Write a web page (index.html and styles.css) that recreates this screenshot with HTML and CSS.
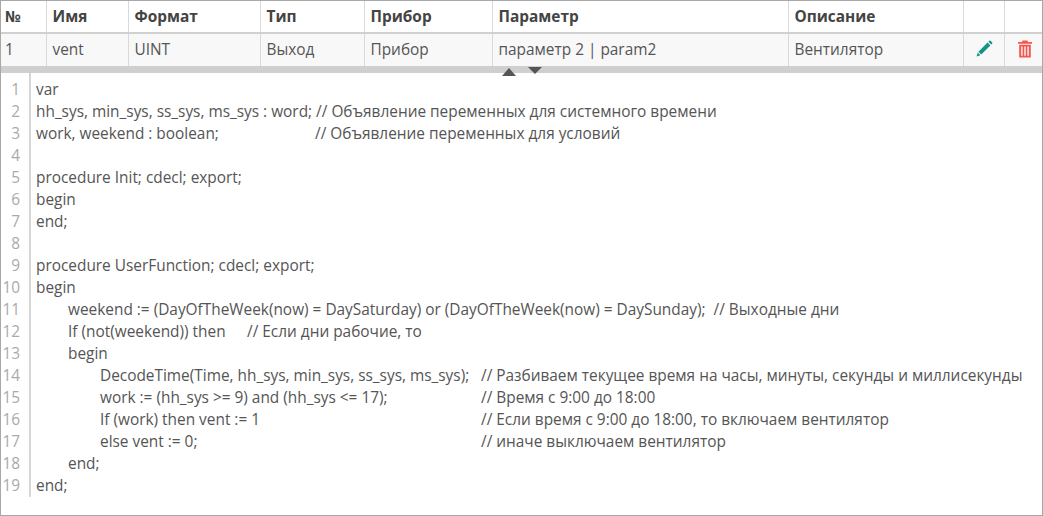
FILE: index.html
```html
<!DOCTYPE html>
<html lang="ru">
<head>
<meta charset="utf-8">
<title>Функция</title>
<link rel="stylesheet" href="styles.css">
</head>
<body>
<div class="frame">
  <table class="vars">
    <colgroup>
      <col class="c1"><col class="c2"><col class="c3"><col class="c4"><col class="c5"><col class="c6"><col class="c7"><col class="c8"><col class="c9">
    </colgroup>
    <thead>
      <tr><th>№</th><th>Имя</th><th>Формат</th><th>Тип</th><th>Прибор</th><th>Параметр</th><th>Описание</th><th></th><th></th></tr>
    </thead>
    <tbody>
      <tr>
        <td>1</td><td>vent</td><td>UINT</td><td>Выход</td><td>Прибор</td><td>параметр 2 | param2</td><td>Вентилятор</td>
        <td class="ic"><svg class="icon" width="18" height="18" viewBox="0 0 18 18"><path fill="#159488" d="M12.6 2.6 15.4 5.4 6.2 14.6 3.4 11.800ZM13.4 1.800l.9-.9c.4-.4 1-.4 1.4 0l1.400 1.400c.4.4.4 1 0 1.400l-.9.9ZM2.800 12.600l2.600 2.600-3.900 1.300Z"/></svg></td>
        <td class="ic trash"><svg class="icon" width="18" height="18" viewBox="0 0 18 18"><path fill="#f4574b" fill-rule="evenodd" d="M6.600 .5h4.800l.6 1.500H16v1.800H2V2H6ZM3.200 4.800H14.800V17.500H3.200ZM5.200 6.600V15.800H6.600V6.600ZM8.300 6.600V15.800H9.700V6.600ZM11.400 6.600V15.800H12.800V6.600Z"/></svg></td>
      </tr>
    </tbody>
  </table>
  <div class="splitter">
    <span class="arrow up"></span>
    <span class="arrow down"></span>
  </div>
  <div class="editor">
    <div class="gutter">
      <div>1</div><div>2</div><div>3</div><div>4</div><div>5</div><div>6</div><div>7</div><div>8</div><div>9</div><div>10</div><div>11</div><div>12</div><div>13</div><div>14</div><div>15</div><div>16</div><div>17</div><div>18</div><div>19</div>
    </div>
    <div class="code">
      <div class="ln">var</div>
      <div class="ln">hh_sys, min_sys, ss_sys, ms_sys : word; // Объявление переменных для системного времени</div>
      <div class="ln"><span class="stop s3">work, weekend : boolean;</span>// Объявление переменных для условий</div>
      <div class="ln"></div>
      <div class="ln">procedure Init; cdecl; export;</div>
      <div class="ln">begin</div>
      <div class="ln">end;</div>
      <div class="ln"></div>
      <div class="ln">procedure UserFunction; cdecl; export;</div>
      <div class="ln">begin</div>
      <div class="ln in1">weekend := (DayOfTheWeek(now) = DaySaturday) or (DayOfTheWeek(now) = DaySunday);  // Выходные дни</div>
      <div class="ln in1"><span class="stop s12">If (not(weekend)) then</span>// Если дни рабочие, то</div>
      <div class="ln in1">begin</div>
      <div class="ln in2"><span class="stop s14">DecodeTime(Time, hh_sys, min_sys, ss_sys, ms_sys);</span>// Разбиваем текущее время на часы, минуты, секунды и миллисекунды</div>
      <div class="ln in2"><span class="stop s15">work := (hh_sys &gt;= 9) and (hh_sys &lt;= 17);</span>// Время с 9:00 до 18:00</div>
      <div class="ln in2"><span class="stop s15">If (work) then vent := 1</span>// Если время с 9:00 до 18:00, то включаем вентилятор</div>
      <div class="ln in2"><span class="stop s15">else vent := 0;</span>// иначе выключаем вентилятор</div>
      <div class="ln in1">end;</div>
      <div class="ln">end;</div>
    </div>
  </div>
</div>
</body>
</html>
```
FILE: styles.css
```css
* { box-sizing: border-box; }
html, body { margin: 0; padding: 0; background: #fff; }
body { width: 1043px; height: 516px; overflow: hidden; font-family: "Open Sans", sans-serif; color: #555; }
.frame { width: 1043px; height: 516px; border: 1px solid #a8a8a8; background: #fff; display: flex; flex-direction: column; overflow: hidden; }
.vars { border-collapse: collapse; table-layout: fixed; width: 1041px; flex: none; font-size: 15.4px; }
.c1 { width: 45px; } .c2 { width: 82px; } .c3 { width: 132px; } .c4 { width: 104px; } .c5 { width: 128px; } .c6 { width: 296px; } .c7 { width: 175px; } .c8 { width: 41px; } .c9 { width: 38px; }
.vars th, .vars td { border-left: 1px solid #d9d9d9; padding: 0 6px; text-align: left; white-space: nowrap; overflow: hidden; }
.vars th:first-child, .vars td:first-child { border-left: 0; padding-left: 4px; }
.vars th { height: 32px; font-weight: 700; color: #444; background: #fff; }
.vars thead tr { border-bottom: 2px solid #d0d0d0; }
.vars td { height: 33px; padding-bottom: 2px; background: #f8f8f8; color: #555; }
.vars td.ic { padding: 0 0 3px; text-align: center; }
.vars td.trash { padding-left: 4px; }
.icon { display: block; margin: 0 auto; }
.splitter { flex: none; height: 7px; background: #cfcfcf; position: relative; }
.arrow { position: absolute; width: 0; height: 0; border-left: 7px solid transparent; border-right: 7px solid transparent; }
.arrow.up { left: 501px; top: 2px; border-bottom: 8px solid #555; }
.arrow.down { left: 527px; top: 1px; border-top: 7px solid #555; }
.editor { display: flex; flex: none; font-size: 15.4px; line-height: 22px; height: 424px; }
.gutter { width: 30px; flex: none; border-right: 2px solid #d6d6d6; padding-top: 6px; padding-right: 9px; text-align: right; color: #aaa; height: 424px; }
.gutter div { height: 22px; }
.code { padding-left: 5px; padding-top: 6px; color: #555; }
.ln { height: 22px; white-space: pre; }
.in1 { padding-left: 32px; }
.in2 { padding-left: 64px; }
.stop { display: inline-block; }
.s3 { width: 279px; }
.s12 { width: 179px; }
.s14 { width: 381px; }
.s15 { width: 381px; }
```
